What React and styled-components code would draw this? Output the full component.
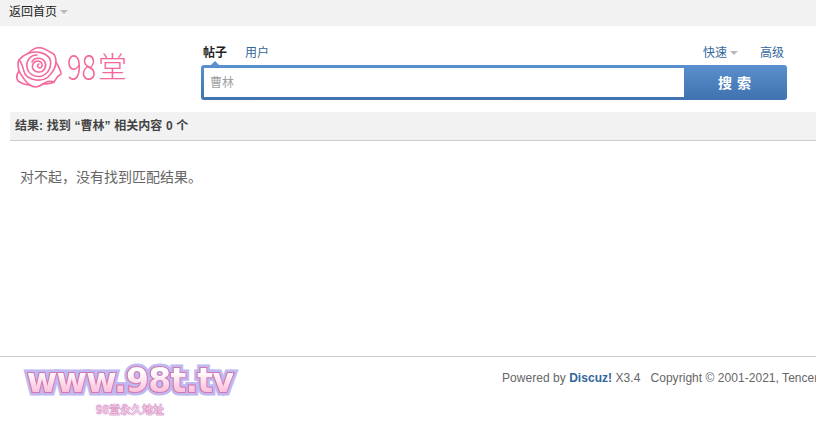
import styled, { createGlobalStyle } from "styled-components";

const GlobalStyles = createGlobalStyle`
  html, body {
    margin: 0;
    background: #fff;
    overflow: hidden;
  }
  body {
    font: 12px/1.5 Tahoma, "Liberation Sans", "Noto Sans CJK SC", sans-serif;
    color: #444;
  }
`;

const Page = styled.div`
  width: 816px;
  height: 424px;
  overflow: hidden;
  display: flex;
  flex-direction: column;
`;

const TopBar = styled.div`
  height: 26px;
  flex: none;
  background: #f2f2f2;
  padding-left: 9px;
  display: flex;
  align-items: center;
  gap: 3px;
  color: #222;
  line-height: 22px;
  padding-bottom: 2px;
  box-sizing: border-box;
`;

const Caret = styled.i`
  width: 0;
  height: 0;
  border: 4px solid transparent;
  border-top: 4px solid #b9b9b9;
  border-bottom: 0;
  margin-left: ${(p) => p.$gap || 0}px;
`;

const Header = styled.div`
  height: 86px;
  flex: none;
  display: flex;
  padding-left: 16px;
  box-sizing: border-box;
`;

const Logo = styled.a`
  width: 185px;
  flex: none;
  display: flex;
  align-items: center;
  gap: 5px;
  height: 42px;
  margin-top: 20px;
`;

const LogoDigits = styled.span`
  display: inline-block;
  width: 29px;
  font-family: "Noto Sans CJK SC", sans-serif;
  font-weight: 300;
  font-size: 35px;
  line-height: 42px;
  color: #f4679b;
  transform: scaleX(0.78);
  transform-origin: left center;
  margin-top: -4px;
`;

const LogoHan = styled.span`
  font-family: "Noto Sans CJK SC", sans-serif;
  font-weight: 300;
  font-size: 29px;
  line-height: 42px;
  color: #f4679b;
  margin-left: -3px;
  margin-top: -5px;
`;

const SearchCol = styled.div`
  width: 586px;
  flex: none;
  display: flex;
  flex-direction: column;
`;

const TabRow = styled.div`
  height: 39px;
  padding-top: 14px;
  box-sizing: border-box;
  display: flex;
  align-items: center;
  padding-left: 2px;
  padding-right: 3px;
  position: relative;
`;

const Tab = styled.span`
  margin-right: ${(p) => p.$mr || 0}px;
  color: ${(p) => (p.$active ? "#222" : "#336699")};
  font-weight: ${(p) => (p.$active ? 700 : 400)};
  display: inline-flex;
  align-items: center;
`;

const Spacer = styled.span`
  flex: 1;
`;

const Notch = styled.i`
  position: absolute;
  left: 10px;
  bottom: 0;
  width: 0;
  height: 0;
  border: 4px solid transparent;
  border-bottom: 4px solid #5a90cd;
  border-top: 0;
`;

const SearchBox = styled.div`
  height: 35px;
  display: flex;
  border-radius: 3px;
  overflow: hidden;
  background: linear-gradient(#5a90cd, #3f72ae);
  padding: 3px 0 3px 3px;
  box-sizing: border-box;
`;

const Query = styled.div`
  width: 480px;
  flex: none;
  background: #fff;
  color: #a0a0a0;
  line-height: 31px;
  padding-left: 6px;
  box-sizing: border-box;
`;

const SearchButton = styled.div`
  flex: 1;
  color: #fff;
  font-size: 14px;
  font-weight: 700;
  letter-spacing: 5px;
  line-height: 30px;
  text-align: center;
  padding-left: 3px;
`;

const ResultBar = styled.div`
  height: 29px;
  flex: none;
  margin-left: 10px;
  background: #f2f2f2;
  border-bottom: 1px solid #cdcdcd;
  box-sizing: border-box;
  padding-left: 5px;
  line-height: 28px;
  font-weight: 700;
  color: #444;
  word-spacing: 0.4px;
`;

const Message = styled.p`
  margin: 0;
  padding: 26px 0 0 20px;
  font-size: 14px;
  line-height: 21px;
  color: #666;
  flex: 1;
`;

const Footer = styled.div`
  height: 68px;
  flex: none;
  border-top: 1px solid #cdcdcd;
  display: flex;
  justify-content: space-between;
  box-sizing: border-box;
  padding-left: 24px;
`;

const UrlLogo = styled.div`
  width: 212px;
  flex: none;
  display: flex;
  flex-direction: column;
  align-items: center;
`;

const UrlMain = styled.span`
  position: relative;
  font-family: "DejaVu Sans", sans-serif;
  font-size: 33px;
  font-weight: 700;
  line-height: 36px;
  margin-top: 6px;
  letter-spacing: -0.7px;
  white-space: nowrap;
  color: #c0b8f0;
  -webkit-text-stroke: 7px #c0b8f0;

  &::before,
  &::after {
    content: attr(data-text);
    position: absolute;
    left: 0;
    top: 0;
  }
  &::before {
    color: #d478b0;
    -webkit-text-stroke: 2px #d478b0;
  }
  &::after {
    -webkit-text-stroke: 0;
    background: linear-gradient(#fff 25%, #fcd0e4 65%, #f9b0d4);
    -webkit-background-clip: text;
    background-clip: text;
    color: transparent;
  }
`;

const UrlSub = styled.span`
  font-family: "Noto Sans CJK SC", sans-serif;
  font-size: 11px;
  line-height: 12px;
  margin-top: 4px;
  font-weight: 700;
  color: #fbdcec;
  -webkit-text-stroke: 0.4px #d77ab6;
  text-shadow: 0 0 2px #c0b8f0;
`;

const Copyright = styled.div`
  width: 314px;
  flex: none;
  overflow: hidden;
  white-space: nowrap;
  padding-top: 12px;
  line-height: 18px;
  color: #666;
  font-family: "Liberation Sans", sans-serif;
  font-size: 12px;
  letter-spacing: 0.04px;
`;

const Brand = styled.b`
  color: #336699;
`;

const Rose = () => (
  <svg width="46" height="42" viewBox="0 0 46 42" fill="none" stroke="#f4689c" strokeWidth="1.6" strokeLinecap="round" strokeLinejoin="round">
    <path d="M3 14 C7 9 11 8 13 7 C16 3 21 1 26 2 C30 3 33 6 36 7 C39 8 40 11 40 16 C42 20 45 24 45 28 C41 30 40 33 38 36 C34 38 31 38 27 38 C23 41 18 42 14 39 C9 39 5 37 2 35 C0 32 1 28 3 25 C2 21 1 17 3 14 Z" />
    <path d="M3 14 C7 18 7 24 9 28 C14 35 26 36 32 31 C36 27 40 22 40 16" />
    <path d="M13 7 C20 5 30 6 34 13 C36 20 33 27 26 30 C19 32 12 28 11 21 C10 15 14 9 21 9" />
    <path d="M16 16 C18 11 26 11 29 16 C31 21 28 26 23 26 C18 26 15 22 17 18 C19 14 25 14 26 18 C27 21 24 23 22 21 C21 20 22 18 23 18" />
    <path d="M3 25 C6 30 9 36 14 39" />
    <path d="M27 38 C30 36 33 34 38 36" />
  </svg>
);

export default function App() {
  return (
    <Page>
      <GlobalStyles />
      <TopBar>
        返回首页
        <Caret />
      </TopBar>
      <Header>
        <Logo>
          <Rose />
          <LogoDigits>98</LogoDigits>
          <LogoHan>堂</LogoHan>
        </Logo>
        <SearchCol>
          <TabRow>
            <Tab $active $mr={18}>帖子</Tab>
            <Tab>用户</Tab>
            <Notch />
            <Spacer />
            <Tab $mr={22}>快速<Caret $gap={3} /></Tab>
            <Tab>高级</Tab>
          </TabRow>
          <SearchBox>
            <Query>曹林</Query>
            <SearchButton>搜索</SearchButton>
          </SearchBox>
        </SearchCol>
      </Header>
      <ResultBar>结果: 找到 “曹林” 相关内容 0 个</ResultBar>
      <Message>对不起，没有找到匹配结果。</Message>
      <Footer>
        <UrlLogo>
          <UrlMain data-text="www.98t.tv">www.98t.tv</UrlMain>
          <UrlSub>98堂永久地址</UrlSub>
        </UrlLogo>
        <Copyright>
          Powered by <Brand>Discuz!</Brand> X3.4 &nbsp; Copyright © 2001-2021, Tencent Cloud.
        </Copyright>
      </Footer>
    </Page>
  );
}
